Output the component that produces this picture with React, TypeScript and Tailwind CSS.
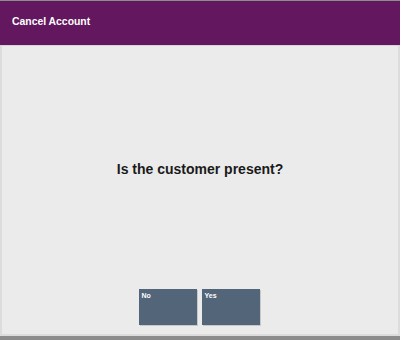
export default function App() {
    const buttons = ["No", "Yes"];

    return (
        <div className="flex h-[340px] w-[400px] flex-col bg-[#ebebeb] font-['Liberation_Sans',Arial,sans-serif]">
            {/* title bar */}
            <div className="h-px bg-[#8c8c8c]" />
            <div className="flex h-[44px] items-center bg-[#62175e] px-[12px] pb-[3px]">
                <span className="text-[10.4px] font-bold text-white">
                    Cancel Account
                </span>
            </div>
            <div className="h-px bg-[#d6d6d6]" />

            {/* body */}
            <div className="flex flex-1 flex-col border-x-2 border-x-[#dcdcdc] bg-[#ebebeb]">
                <div className="mt-[115px] text-center text-[14px] font-bold leading-[17px] text-[#1a1a1a]">
                    Is the customer present?
                </div>
                <div className="mt-auto mb-[9px] flex justify-center gap-[5px] pr-[2px]">
                    {buttons.map((label) => (
                        <button
                            key={label}
                            className="flex h-[36px] w-[58px] items-start bg-[#536579] px-[3px] pt-[2px] text-left text-[7px] font-bold text-white shadow-[1px_1px_0_#c8c8c8]"
                        >
                            {label}
                        </button>
                    ))}
                </div>
            </div>
            <div className="h-[2px] bg-[#dcdcdc]" />
            <div className="h-[4px] bg-[#8c8c8c]" />
        </div>
    );
}
